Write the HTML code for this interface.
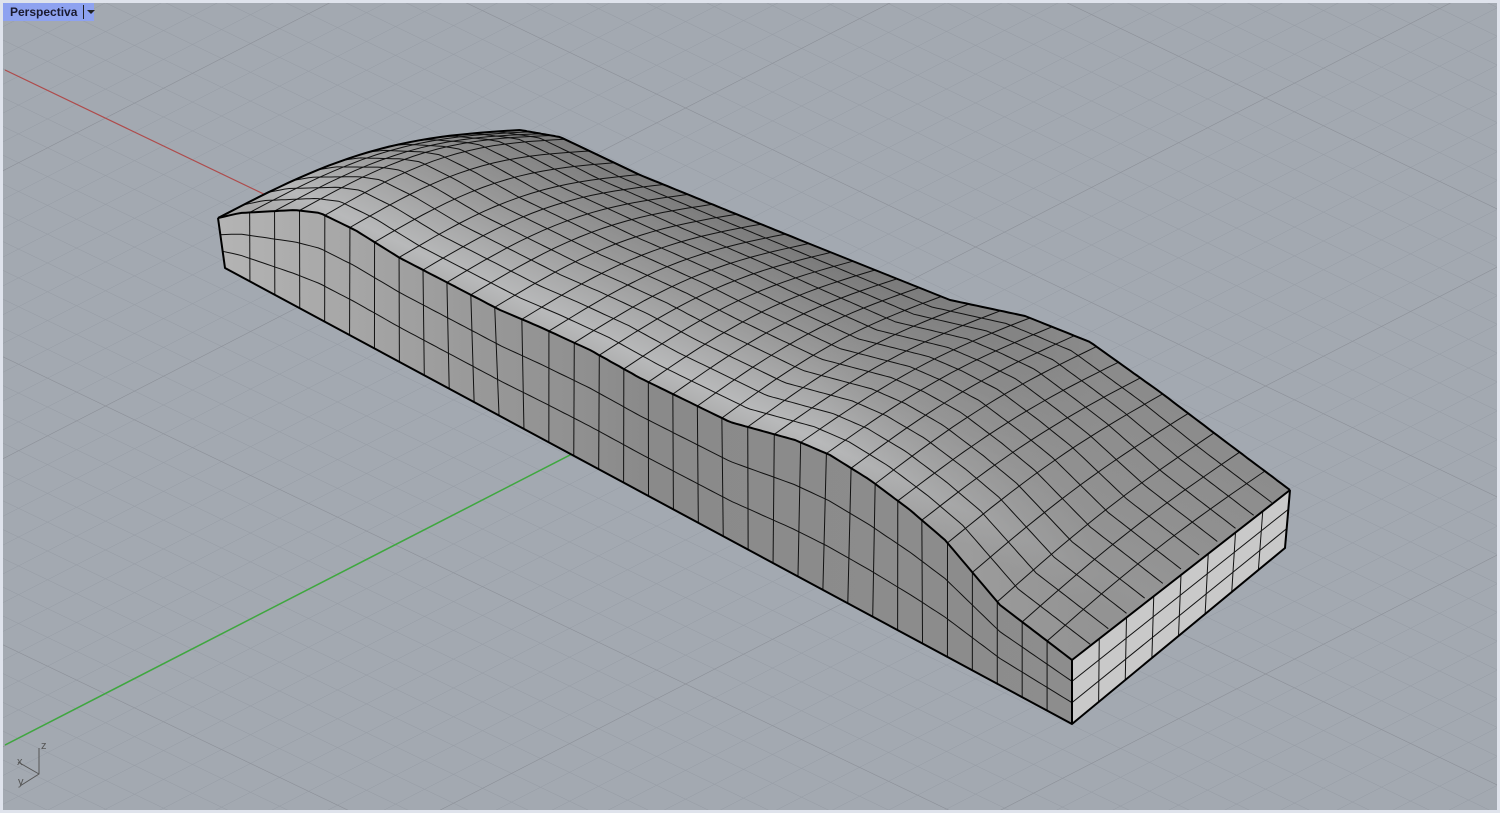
<!DOCTYPE html>
<html><head><meta charset="utf-8"><style>
html,body{margin:0;padding:0;width:1500px;height:813px;overflow:hidden;background:#dfe3ec}
#vp{position:absolute;left:3px;top:3px;width:1494px;height:807px;background:#a3a9b1;overflow:hidden}
#lbl{position:absolute;left:3px;top:3px;height:18px;width:91px;background:#8ea2f0;font:bold 12px "Liberation Sans",sans-serif;color:#1a1a30;line-height:18px}
#lbl span{position:absolute;left:7px}
#lbl i{position:absolute;left:80px;top:2px;width:1px;height:14px;background:#222}
#lbl b{position:absolute;left:84px;top:7px;border-left:4px solid transparent;border-right:4px solid transparent;border-top:4px solid #222}
</style></head><body>
<div id="vp"><svg id="s" width="1494" height="807" viewBox="3 3 1494 807" xmlns="http://www.w3.org/2000/svg">
<defs>
<pattern id="gm" patternUnits="userSpaceOnUse" width="10" height="10" patternTransform="matrix(2.9 1.39 2.9 -1.49 685 396)">
<path d="M0 0H10M0 0V10" stroke="#959ba4" stroke-width="0.35" fill="none"/></pattern>
<pattern id="gM" patternUnits="userSpaceOnUse" width="100" height="100" patternTransform="matrix(2.9 1.39 2.9 -1.49 685 396)">
<path d="M0 0H100M0 0V100" stroke="#8a8e96" stroke-width="0.4" fill="none"/></pattern>
<linearGradient id="tg" gradientUnits="userSpaceOnUse" x1="790" y1="230" x2="700" y2="420">
<stop offset="0" stop-color="#767676"/><stop offset="0.5" stop-color="#9a9a9a"/><stop offset="0.85" stop-color="#b8b9ba"/><stop offset="1" stop-color="#a8a8a8"/></linearGradient>
<linearGradient id="dk" gradientUnits="userSpaceOnUse" x1="820" y1="0" x2="1100" y2="0">
<stop offset="0" stop-color="#8a8a8a" stop-opacity="0"/><stop offset="1" stop-color="#8f8f8f" stop-opacity="0.85"/></linearGradient>
<linearGradient id="sg" gradientUnits="userSpaceOnUse" x1="220" y1="0" x2="1072" y2="0">
<stop offset="0" stop-color="#b4b4b4"/><stop offset="0.3" stop-color="#999"/><stop offset="0.5" stop-color="#8a8a8a"/><stop offset="1" stop-color="#8d8d8d"/></linearGradient>
</defs>
<rect x="0" y="0" width="1500" height="813" fill="url(#gm)"/>
<rect x="0" y="0" width="1500" height="813" fill="url(#gM)"/>
<line x1="5" y1="70" x2="685" y2="396" stroke="#b04a4a" stroke-width="1.2"/>
<line x1="5" y1="745" x2="685" y2="396" stroke="#3ea83e" stroke-width="1.5"/>
<g id="obj"></g>
<g stroke="#555" stroke-width="1" fill="none"><path d="M39 748V774L20 786M39 774L18 762"/></g>
<g font-family="Liberation Sans,sans-serif" font-size="11" fill="#555"><text x="41" y="749">z</text><text x="17" y="765">x</text><text x="18" y="785">y</text></g>
</svg></div>
<div id="lbl"><span>Perspectiva</span><i></i><b></b></div>
<script>
(function(){
var NS="http://www.w3.org/2000/svg";
var root=document.getElementById('obj');
function el(tag,attrs,parent){var e=document.createElementNS(NS,tag);for(var k in attrs)e.setAttribute(k,attrs[k]);(parent||root).appendChild(e);return e;}
function pw(pts,u){for(var i=1;i<pts.length;i++){if(u<=pts[i][0]){var a=pts[i-1],b=pts[i],t=(u-a[0])/(b[0]-a[0]);return [a[1]+(b[1]-a[1])*t,a[2]+(b[2]-a[2])*t];}}var l=pts[pts.length-1];return [l[1],l[2]];}
var F=[[0,218,218],[0.018,240,213],[0.083,295,210],[0.112,320,213],[0.153,355,230],[0.207,400,258],[0.33,500,310],[0.372,540,327],[0.43,590,350],[0.49,640,378],[0.598,730,422],[0.67,795,440],[0.71,830,455],[0.758,870,480],[0.81,910,510],[0.85,945,540],[0.915,1000,605],[1,1072,660]];
var B=[[0,520,130],[0.112,560,137],[0.207,640,175],[0.4,800,240],[0.6,950,300],[0.67,1025,316],[0.756,1090,342],[0.85,1160,392],[0.93,1230,445],[1,1290,490]];
function G(u){return [225+(1072-225)*u,268+(724-268)*u];}
function T(u,v){var f=pw(F,u),b=pw(B,u);var bow=Math.sin(Math.PI*v)*(-(16*(1-u)+6));return [f[0]+(b[0]-f[0])*v,f[1]+(b[1]-f[1])*v+bow];}
function P(a){var s=[];for(var i=0;i<a.length;i++)s.push(a[i][0].toFixed(1)+','+a[i][1].toFixed(1));return s.join(' ');}
var N=200,k,i,u,a,f,g,t;
var top=[];for(k=0;k<=N;k++)top.push(pw(F,k/N));for(k=N;k>=0;k--)top.push(pw(B,k/N));
for(k=0;k<=30;k++)top.push(T(0,k/30));
var sil=[];for(k=0;k<=30;k++)sil.push(T(0,k/30));
el('polygon',{points:P(top),fill:'url(#tg)'});
el('polygon',{points:P(top),fill:'url(#dk)'});
var side=[];for(k=0;k<=N;k++)side.push(pw(F,k/N));for(k=N;k>=0;k--)side.push(G(k/N));
el('polygon',{points:P(side),fill:'url(#sg)'});
el('polygon',{points:'1072,660 1290,490 1285,548 1072,724',fill:'#c9c9c9'});
var gl=el('g',{stroke:'#111','stroke-width':'1',fill:'none'});
var NU=34,NV=12;
for(i=1;i<NU;i++){u=i/NU;a=[];for(k=0;k<=20;k++)a.push(T(u,k/20));el('polyline',{points:P(a)},gl);f=pw(F,u);g=G(u);el('line',{x1:f[0],y1:f[1],x2:g[0],y2:g[1]},gl);}
for(i=1;i<NV;i++){a=[];for(k=0;k<=N;k++)a.push(T(k/N,i/NV));el('polyline',{points:P(a)},gl);}
for(i=1;i<3;i++){a=[];for(k=0;k<=N;k++){f=pw(F,k/N);g=G(k/N);a.push([f[0]+(g[0]-f[0])*i/3,f[1]+(g[1]-f[1])*i/3]);}el('polyline',{points:P(a)},gl);}
for(i=1;i<8;i++){t=i/8;el('line',{x1:1072+218*t,y1:660-170*t,x2:1072+213*t,y2:724-176*t},gl);}
for(i=1;i<3;i++){t=i/3;el('line',{x1:1072,y1:660+64*t,x2:1290-5*t,y2:490+58*t},gl);}
var eg=el('g',{stroke:'#000','stroke-width':'2',fill:'none','stroke-linejoin':'round'});
var ed=[];for(k=0;k<=N;k++)ed.push(pw(B,k/N));
var fe=[];for(k=0;k<=N;k++)fe.push(pw(F,k/N));
el('polyline',{points:P(ed)},eg);el('polyline',{points:P(fe)},eg);el('polyline',{points:P(sil)},eg);
el('polyline',{points:'218,218 225,268 1072,724 1285,548 1290,490'},eg);
el('line',{x1:1072,y1:660,x2:1072,y2:724},eg);
el('line',{x1:1072,y1:660,x2:1290,y2:490},eg);
})();
</script>
</body></html>
